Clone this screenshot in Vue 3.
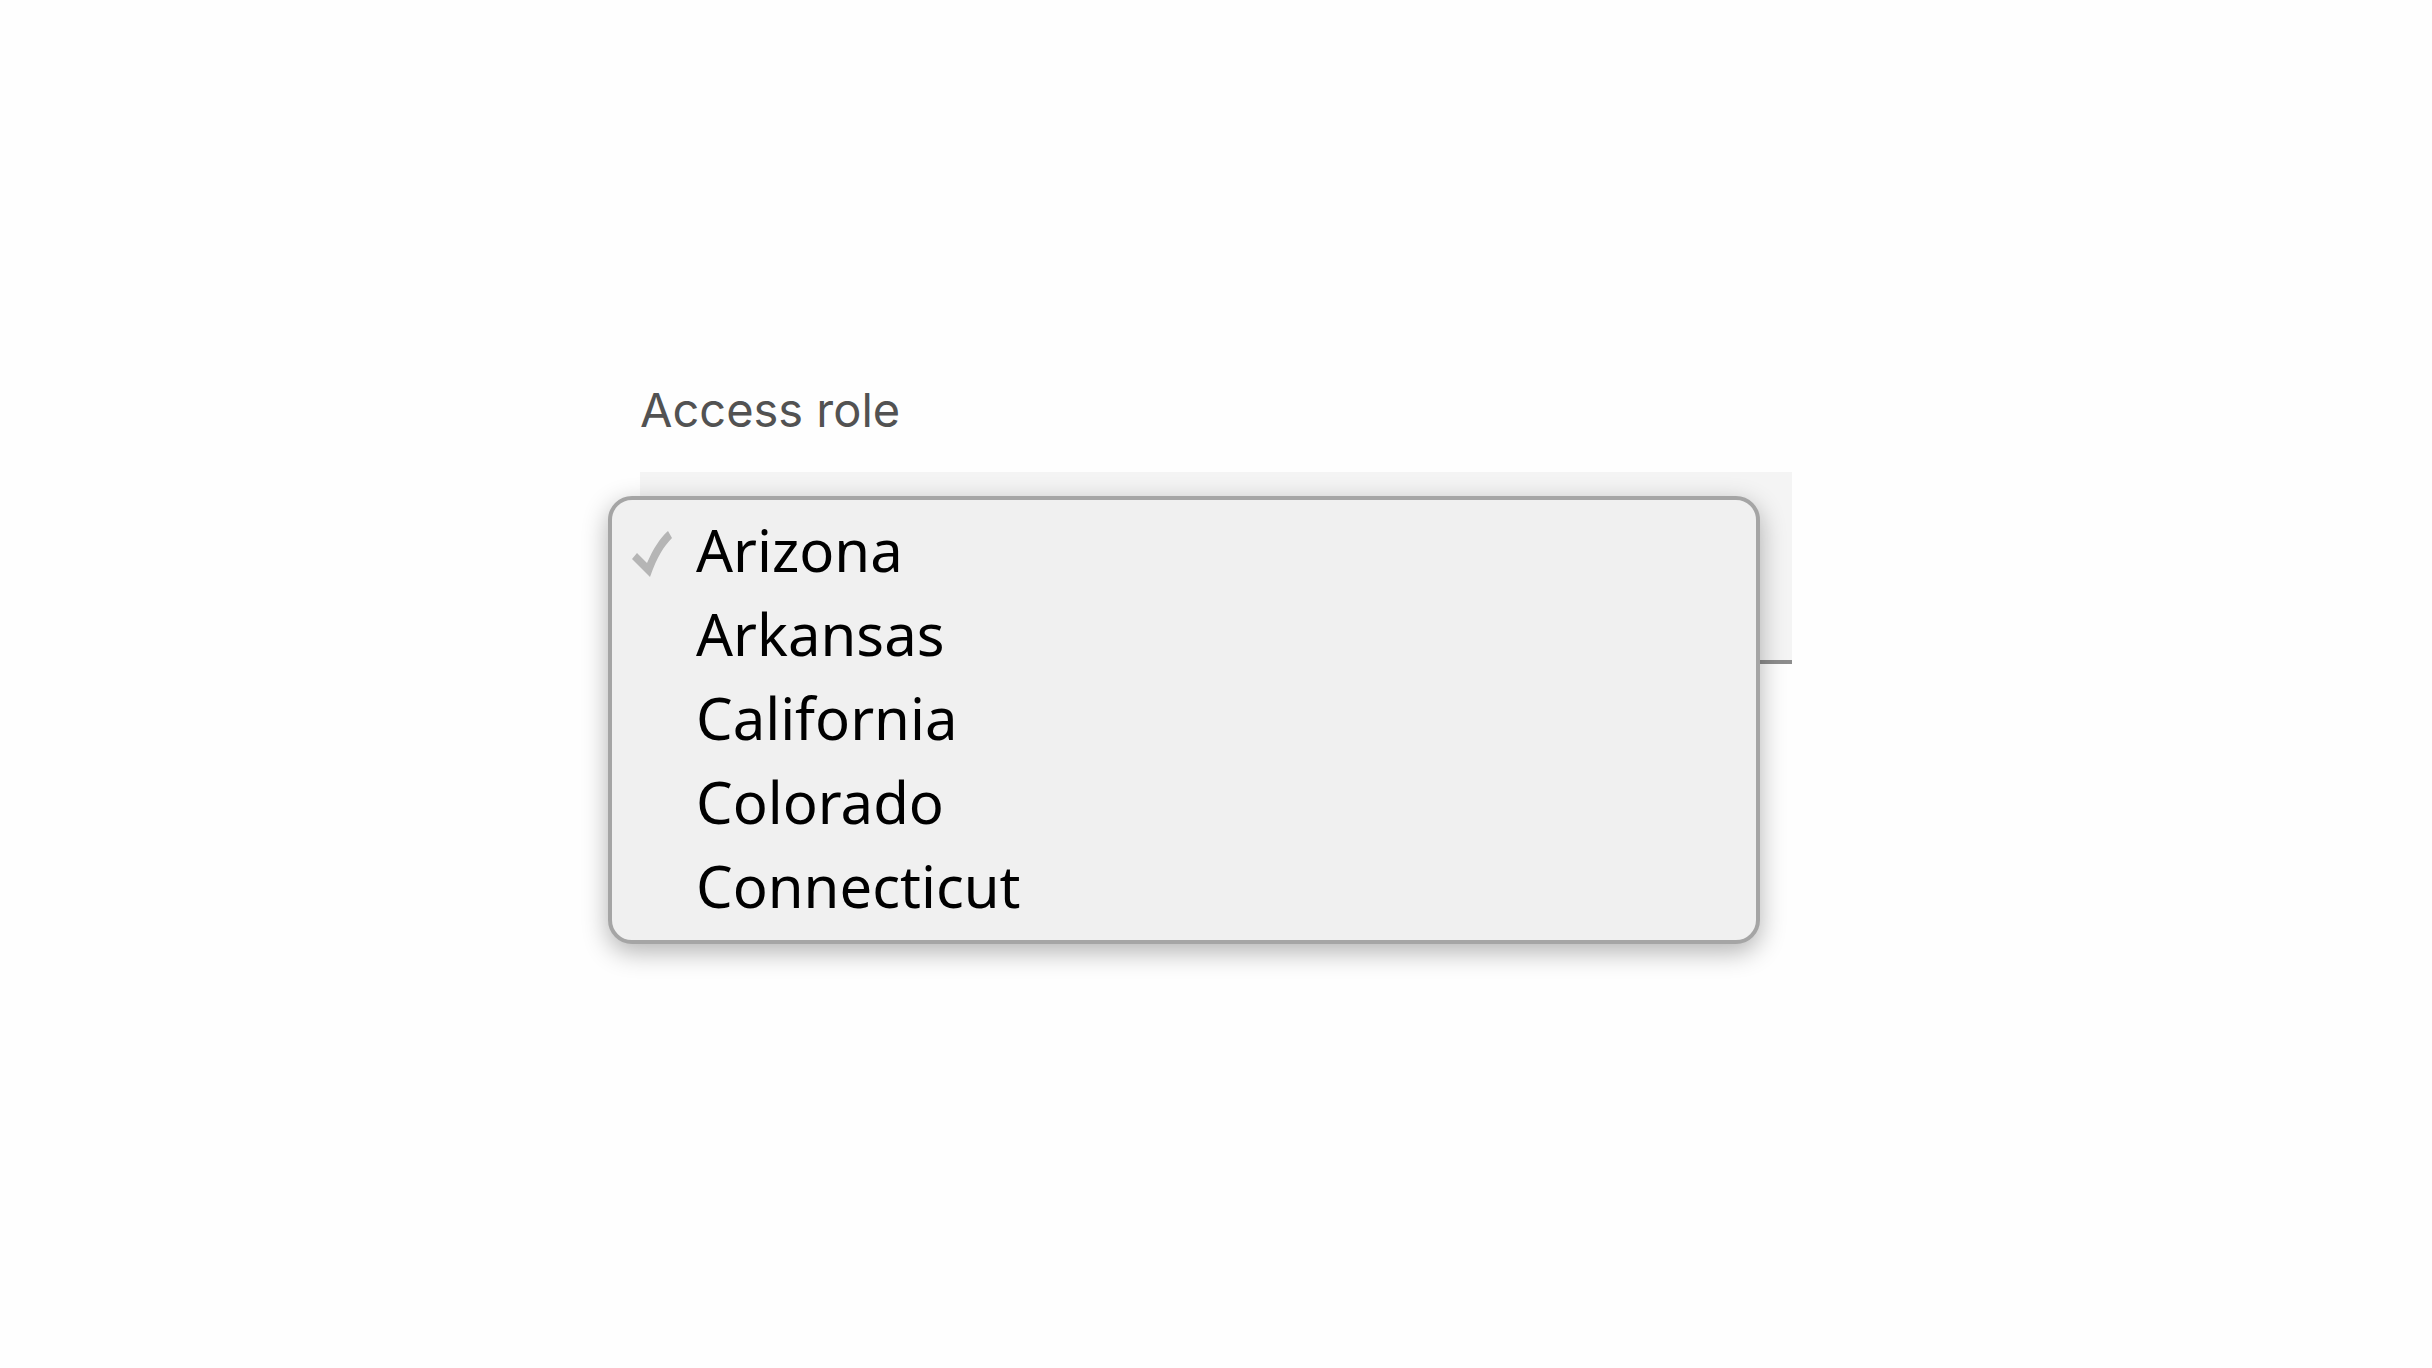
<script setup>
import { ref } from 'vue'

const roles = ['Arizona', 'Arkansas', 'California', 'Colorado', 'Connecticut']
const selected = ref('Arizona')
</script>

<template>
  <main class="page">
    <div class="field">
      <label class="label" for="access-role">Access role</label>
      <div class="control">
        <select id="access-role" v-model="selected" class="select">
          <option v-for="role in roles" :key="role" :value="role">{{ role }}</option>
        </select>
        <ul class="menu" role="listbox" aria-label="Access role">
          <li
            v-for="role in roles"
            :key="role"
            class="option"
            role="option"
            :aria-selected="role === selected"
            @click="selected = role"
          >
            <span class="mark">
              <svg v-if="role === selected" class="check" viewBox="0 0 40 46" aria-hidden="true">
                <path d="M0 28 L5 22 L15 32 C21 18 28 7 36 0 L40 7 C32 15 25 26 18 46 Z" />
              </svg>
            </span>
            <span>{{ role }}</span>
          </li>
        </ul>
      </div>
    </div>
  </main>
</template>

<style>
body {
  background: #fefefe;
}
</style>

<style scoped>
.page {
  display: flex;
  justify-content: center;
  align-items: flex-start;
  box-sizing: border-box;
  min-height: 100vh;
  padding: 376px 40px 80px;
  font-family: "Noto Sans", "Open Sans", sans-serif;
}

.field {
  display: flex;
  flex-direction: column;
  gap: 28px;
  width: 100%;
  max-width: 1152px;
}

.label {
  font-family: Inter, "Noto Sans", sans-serif;
  font-size: 47px;
  line-height: 68px;
  color: #525252;
}

.control {
  position: relative;
}

.select {
  display: block;
  box-sizing: border-box;
  width: 100%;
  height: 192px;
  padding: 0 64px;
  border: 0;
  border-bottom: 4px solid #8d8d8d;
  border-radius: 0;
  background: #f4f4f4;
  color: #161616;
  font: inherit;
  font-size: 58px;
  appearance: none;
}

.menu {
  position: absolute;
  top: 24px;
  left: -32px;
  box-sizing: border-box;
  width: 100%;
  margin: 0;
  padding: 8px 20px 12px;
  border: 4px solid #a5a5a5;
  border-radius: 24px;
  background: #f0f0f0;
  box-shadow: 0 8px 26px rgba(0, 0, 0, 0.3);
  list-style: none;
}

.option {
  display: flex;
  align-items: center;
  font-size: 58px;
  line-height: 84px;
  color: #000;
}

.mark {
  display: flex;
  flex: none;
  width: 64px;
  padding-top: 8px;
}

.check {
  width: 40px;
  height: 46px;
  fill: #b5b5b5;
}
</style>
